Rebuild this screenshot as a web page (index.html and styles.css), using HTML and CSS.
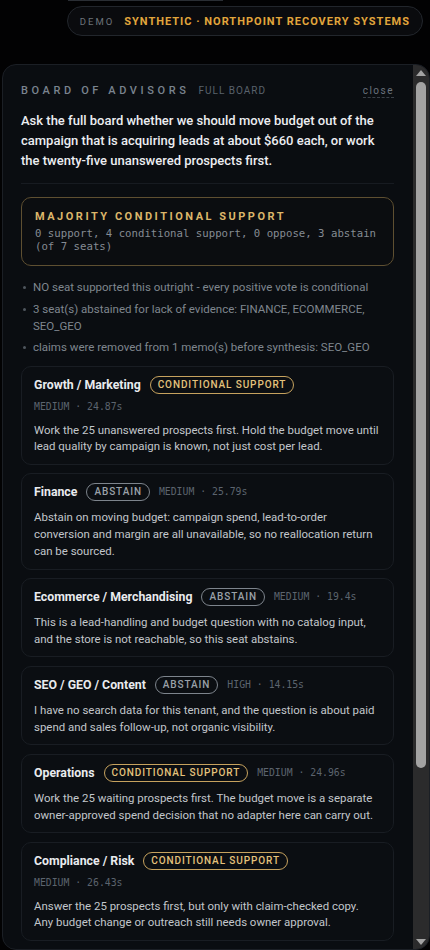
FILE: index.html
```html
<!DOCTYPE html>
<html lang="en">
<head>
<meta charset="utf-8">
<title>Board of Advisors</title>
<link rel="stylesheet" href="styles.css">
</head>
<body>
<div class="topline"></div>
<div class="pillrow">
  <div class="pill"><span class="pill-demo">DEMO</span><span class="pill-name">SYNTHETIC · NORTHPOINT RECOVERY SYSTEMS</span></div>
</div>
<section class="panel">
  <div class="panel-inner">
    <div class="head">
      <span class="head-title">BOARD OF ADVISORS</span>
      <span class="head-sub">FULL BOARD</span>
      <span class="head-close">close</span>
    </div>
    <p class="question">Ask the full board whether we should move budget out of the campaign that is acquiring leads at about $660 each, or work the twenty-five unanswered prospects first.</p>
    <div class="majority">
      <div class="majority-title">MAJORITY CONDITIONAL SUPPORT</div>
      <div class="majority-count">0 support, 4 conditional support, 0 oppose, 3 abstain (of 7 seats)</div>
    </div>
    <ul class="notes">
      <li>NO seat supported this outright - every positive vote is conditional</li>
      <li>3 seat(s) abstained for lack of evidence: FINANCE, ECOMMERCE, SEO_GEO</li>
      <li>claims were removed from 1 memo(s) before synthesis: SEO_GEO</li>
    </ul>
    <div class="cards">
      <article class="card">
        <div class="card-head"><span class="seat">Growth / Marketing</span><span class="badge cond">CONDITIONAL SUPPORT</span><span class="meta">MEDIUM · 24.87s</span></div>
        <p class="card-body">Work the 25 unanswered prospects first. Hold the budget move until lead quality by campaign is known, not just cost per lead.</p>
      </article>
      <article class="card">
        <div class="card-head"><span class="seat">Finance</span><span class="badge abst">ABSTAIN</span><span class="meta">MEDIUM · 25.79s</span></div>
        <p class="card-body">Abstain on moving budget: campaign spend, lead-to-order conversion and margin are all unavailable, so no reallocation return can be sourced.</p>
      </article>
      <article class="card">
        <div class="card-head"><span class="seat">Ecommerce / Merchandising</span><span class="badge abst">ABSTAIN</span><span class="meta">MEDIUM · 19.4s</span></div>
        <p class="card-body">This is a lead-handling and budget question with no catalog input, and the store is not reachable, so this seat abstains.</p>
      </article>
      <article class="card">
        <div class="card-head"><span class="seat">SEO / GEO / Content</span><span class="badge abst">ABSTAIN</span><span class="meta">HIGH · 14.15s</span></div>
        <p class="card-body">I have no search data for this tenant, and the question is about paid spend and sales follow-up, not organic visibility.</p>
      </article>
      <article class="card">
        <div class="card-head"><span class="seat">Operations</span><span class="badge cond">CONDITIONAL SUPPORT</span><span class="meta">MEDIUM · 24.96s</span></div>
        <p class="card-body">Work the 25 waiting prospects first. The budget move is a separate owner-approved spend decision that no adapter here can carry out.</p>
      </article>
      <article class="card">
        <div class="card-head"><span class="seat">Compliance / Risk</span><span class="badge cond">CONDITIONAL SUPPORT</span><span class="meta">MEDIUM · 26.43s</span></div>
        <p class="card-body">Answer the 25 prospects first, but only with claim-checked copy. Any budget change or outreach still needs owner approval.</p>
      </article>
      <article class="card">
        <div class="card-head"><span class="seat">Sales / Customer</span><span class="badge cond">CONDITIONAL SUPPORT</span><span class="meta">MEDIUM · 22.61s</span></div>
        <p class="card-body">Call back the 25 open prospects this week before any spend shift, and log the outcome per campaign.</p>
      </article>
    </div>
  </div>
  <div class="scrollbar" aria-hidden="true">
    <span class="sb-up"></span>
    <span class="sb-thumb"></span>
    <span class="sb-down"></span>
  </div>
</section>
</body>
</html>
```
FILE: styles.css
```css
* { box-sizing: border-box; }
html, body { margin: 0; padding: 0; }
body {
  background: #020203;
  color: #e6e8eb;
  font-family: Roboto, Inter, "Noto Sans", Arial, sans-serif;
  height: 950px;
  overflow: hidden;
}
.topline {
  height: 1px;
  width: 155px;
  margin-left: 68px;
  background: #2a2e34;
}
.pillrow {
  display: flex;
  justify-content: flex-end;
  padding: 5px 7px 0 0;
  height: 63px;
}
.pill {
  display: flex;
  align-items: center;
  gap: 10px;
  height: 30px;
  padding: 0 12px 0 12px;
  border: 1px solid #22262c;
  border-radius: 15px;
  background: #0a0b0e;
}
.pill-demo {
  font-size: 9.5px;
  letter-spacing: 2px;
  color: #6d737a;
}
.pill-name {
  font-size: 11px;
  font-weight: 700;
  letter-spacing: 1px;
  color: #e2a63c;
}
.panel {
  position: relative;
  margin-left: 2px;
  width: 428px;
  height: 886px;
  border: 1px solid #1b1f25;
  border-radius: 14px;
  background: #0a0d11;
  overflow: hidden;
}
.panel-inner {
  height: 100%;
  overflow: hidden;
  padding: 19px 35px 20px 18px;
}
.scrollbar {
  position: absolute;
  top: 0;
  right: 0;
  bottom: 0;
  width: 16px;
  background: #2b2b2c;
}
.sb-up, .sb-down {
  position: absolute;
  left: 3px;
  width: 0;
  height: 0;
  border-left: 5px solid transparent;
  border-right: 5px solid transparent;
}
.sb-up {
  top: 5px;
  border-bottom: 6px solid #a3a3a3;
}
.sb-down {
  bottom: 4px;
  border-top: 6px solid #a3a3a3;
}
.sb-thumb {
  position: absolute;
  left: 3px;
  top: 17px;
  width: 10px;
  height: 686px;
  border-radius: 5px;
  background: #a3a3a3;
}
.head {
  display: flex;
  align-items: baseline;
  height: 15px;
}
.head-title {
  font-size: 11px;
  letter-spacing: 3.6px;
  color: #7a848f;
  font-weight: 500;
}
.head-sub {
  margin-left: 9px;
  font-size: 10px;
  letter-spacing: 1px;
  color: #59626c;
}
.head-close {
  margin-left: auto;
  font-size: 10px;
  letter-spacing: 1.5px;
  color: #6b737d;
  border-bottom: 1px dashed #3a4048;
  line-height: 12px;
}
.question {
  margin: 12px 0 0;
  font-size: 13px;
  line-height: 20px;
  font-weight: 500;
  color: #eceef1;
  padding-bottom: 12px;
  border-bottom: 1px solid #171b21;
}
.majority {
  margin-top: 13px;
  border: 1px solid #5e4f31;
  border-radius: 10px;
  padding: 12px 13px;
  background: #0b0d10;
}
.majority-title {
  font-size: 11px;
  line-height: 14px;
  font-weight: 700;
  letter-spacing: 2.5px;
  color: #dcb66a;
}
.majority-count {
  margin-top: 3px;
  font-family: "DejaVu Sans Mono", "Liberation Mono", monospace;
  font-size: 10.7px;
  line-height: 13px;
  color: #858b93;
}
.notes {
  list-style: none;
  margin: 13px 0 0;
  padding: 0;
  display: flex;
  flex-direction: column;
  gap: 4.5px;
}
.notes li {
  position: relative;
  padding-left: 12px;
  font-size: 11.5px;
  line-height: 17px;
  color: #7f868e;
}
.notes li::before {
  content: "";
  position: absolute;
  left: 2px;
  top: 7px;
  width: 3px;
  height: 3px;
  border-radius: 50%;
  background: #4f565e;
}
.cards {
  margin-top: 9.5px;
  display: flex;
  flex-direction: column;
  gap: 8.5px;
}
.card {
  border: 1px solid #191d23;
  border-radius: 10px;
  background: #0b0e12;
  padding: 9px 13px 9px 12px;
}
.card-head {
  display: flex;
  flex-wrap: wrap;
  align-items: center;
  column-gap: 9px;
  row-gap: 6px;
}
.seat {
  font-size: 12.3px;
  font-weight: 700;
  color: #e9ebee;
  line-height: 18px;
}
.badge {
  height: 18px;
  line-height: 16px;
  padding: 0 7px;
  border-radius: 9px;
  font-size: 10px;
  letter-spacing: 0.9px;
  font-weight: 500;
}
.badge.cond {
  color: #e4c27c;
  border: 1px solid #c6a25e;
}
.badge.abst {
  color: #9aa1a8;
  border: 1px solid #7d848c;
}
.meta {
  font-family: "DejaVu Sans Mono", "Liberation Mono", monospace;
  font-size: 9.8px;
  line-height: 14px;
  color: #5c646e;
}
.card-body {
  margin: 8px 0 0;
  font-size: 11.45px;
  line-height: 16.7px;
  color: #c2c6cb;
}
```
